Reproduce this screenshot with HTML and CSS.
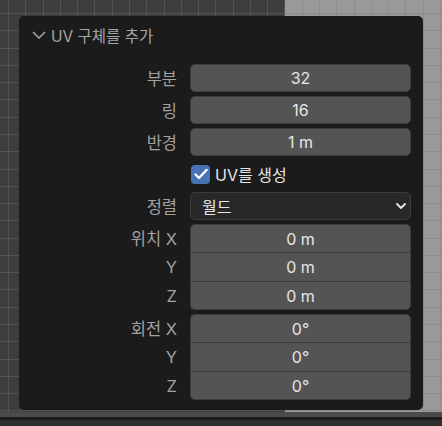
FILE: index.html
```html
<!DOCTYPE html>
<html lang="ko">
<head>
<meta charset="utf-8">
<link rel="stylesheet" href="styles.css">
</head>
<body>
<div class="screen">
  <div class="viewport">
    <div class="panel">
      <div class="header">
        <svg class="chev" width="14" height="8" viewBox="0 0 14 8"><path d="M1 1 L7 7 L13 1" fill="none" stroke="#a0a0a0" stroke-width="1.6"/></svg>
        <span class="title">UV 구체를 추가</span>
      </div>
      <div class="rows">
        <div class="row"><span class="label">부분</span><div class="field num">32</div></div>
        <div class="row"><span class="label">링</span><div class="field num">16</div></div>
        <div class="row"><span class="label">반경</span><div class="field num">1 m</div></div>
        <div class="row"><span class="label"></span>
          <div class="check">
            <span class="box"><svg width="14" height="12" viewBox="0 0 14 12"><path d="M1.5 6.5 L5 10 L12.5 2" fill="none" stroke="#fff" stroke-width="2.4" stroke-linecap="round" stroke-linejoin="round"/></svg></span>
            <span class="check-text">UV를 생성</span>
          </div>
        </div>
        <div class="row"><span class="label">정렬</span>
          <div class="field select"><span>월드</span>
            <svg width="10" height="6" viewBox="0 0 10 6"><path d="M1 1 L5 5 L9 1" fill="none" stroke="#e8e8e8" stroke-width="1.8" stroke-linecap="round" stroke-linejoin="round"/></svg>
          </div>
        </div>
        <div class="group">
          <div class="row g"><span class="label">위치 X</span><div class="field num cell first">0 m</div></div>
          <div class="row g"><span class="label">Y</span><div class="field num cell mid">0 m</div></div>
          <div class="row g"><span class="label">Z</span><div class="field num cell last">0 m</div></div>
        </div>
        <div class="group">
          <div class="row g"><span class="label">회전 X</span><div class="field num cell first">0°</div></div>
          <div class="row g"><span class="label">Y</span><div class="field num cell mid">0°</div></div>
          <div class="row g"><span class="label">Z</span><div class="field num cell last">0°</div></div>
        </div>
      </div>
    </div>
  </div>
  <div class="band"></div>
  <div class="band-dark"></div>
  <div class="band-bottom"></div>
</div>
</body>
</html>
```

FILE: styles.css
```css
* { box-sizing: border-box; }
html, body { margin: 0; padding: 0; }
body {
  width: 442px;
  height: 426px;
  overflow: hidden;
  font-family: "Inter", "Noto Sans CJK KR", sans-serif;
  background: #2c2c2c;
}
.screen {
  width: 442px;
  height: 426px;
  display: flex;
  flex-direction: column;
}
.viewport {
  height: 412px;
  padding: 16px 0 0 19px;
  background:
    repeating-linear-gradient(90deg, rgba(255,255,255,0) 0 8px, rgba(120,120,120,0.35) 8px 9px, rgba(255,255,255,0) 9px 17.28px),
    repeating-linear-gradient(180deg, rgba(255,255,255,0) 0 13px, rgba(120,120,120,0.35) 13px 14px, rgba(255,255,255,0) 14px 17.28px),
    linear-gradient(90deg, #3d3d3d 0, #3d3d3d 285px, #999 285px, #999 100%);
}
.panel {
  width: 404px;
  height: 394px;
  background: #1b1b1b;
  border-radius: 5px;
  padding: 0 12px 10px 12px;
}
.header {
  height: 38px;
  display: flex;
  align-items: center;
  padding-left: 1px;
}
.chev { margin-right: 5px; margin-top: -1px; }
.title {
  color: #a4a4a4;
  font-size: 15.5px;
}
.rows {
  margin-top: 10px;
  display: flex;
  flex-direction: column;
  gap: 4px;
}
.row {
  display: flex;
  align-items: center;
  height: 28px;
}
.label {
  width: 146px;
  text-align: right;
  color: #a2a2a2;
  font-size: 16.5px;
  margin-right: 13px;
  flex: none;
}
.field {
  flex: 1;
  height: 28px;
  border-radius: 5px;
  display: flex;
  align-items: center;
  font-size: 16px;
  color: #e6e6e6;
}
.num {
  background: #545454;
  border: 1px solid #3e3e3e;
  justify-content: center;
}
.select {
  background: #282828;
  border: 1px solid #3c3c3c;
  justify-content: space-between;
  padding: 0 4px 0 11px;
}
.check {
  display: flex;
  align-items: center;
}
.box {
  width: 19px;
  height: 19px;
  border-radius: 4px;
  background: #4772b3;
  display: flex;
  align-items: center;
  justify-content: center;
  margin-left: 1px;
  margin-right: 5px;
}
.check-text {
  color: #e6e6e6;
  font-size: 16px;
}
.group {
  display: flex;
  flex-direction: column;
}
.row.g { height: auto; }
.cell { border-radius: 0; }
.cell.first { height: 28px; border-radius: 5px 5px 0 0; border-bottom: none; }
.cell.mid { height: 29px; border-bottom: none; border-top: 1px solid #383838; }
.cell.last { height: 29px; border-radius: 0 0 5px 5px; border-top: 1px solid #383838; }
.band {
  height: 5px;
  background: #4b4b4b;
}
.band-dark {
  height: 3px;
  background: #1d1d1d;
}
.band-bottom {
  flex: 1;
  background: #2d2d2d;
}
```
